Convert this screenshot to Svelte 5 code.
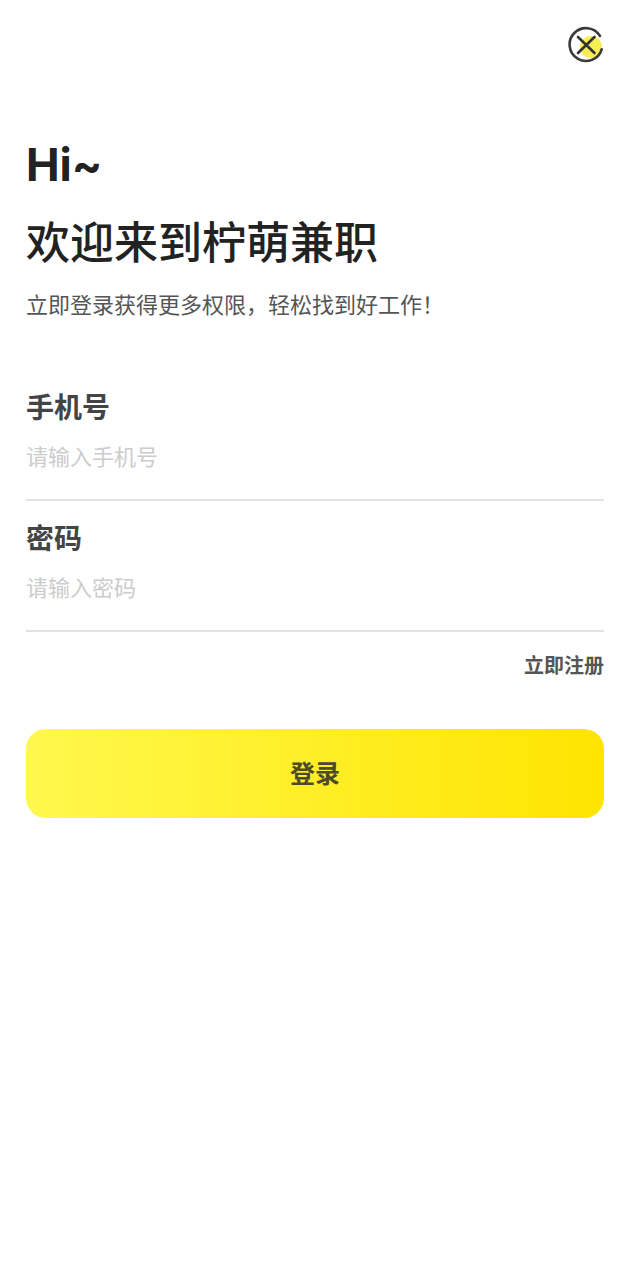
<script>
    let phone = $state('');
    let password = $state('');
</script>

<div class="page">
    <div class="top">
        <button type="button" class="close" aria-label="close">
            <svg width="38" height="38" viewBox="0 0 38 38" fill="none">
                <circle cx="24" cy="22" r="11" fill="#f7ee55" />
                <path d="M33 11 A16.4 16.4 0 1 0 34.7 24.3" stroke="#3a3a3a" stroke-width="2.6" stroke-linecap="round" />
                <path d="M11 12 L27.5 28 M27.5 12 L11 28" stroke="#333" stroke-width="2.6" stroke-linecap="round" />
            </svg>
        </button>
    </div>

    <h1 class="hi">Hi~</h1>
    <h2 class="welcome">欢迎来到柠萌兼职</h2>
    <p class="sub">立即登录获得更多权限，轻松找到好工作！</p>

    <div class="field first">
        <label for="phone">手机号</label>
        <input id="phone" type="text" placeholder="请输入手机号" bind:value={phone} />
    </div>
    <div class="field">
        <label for="pwd">密码</label>
        <input id="pwd" type="password" placeholder="请输入密码" bind:value={password} />
    </div>

    <div class="register">立即注册</div>

    <button type="button" class="login">登录</button>
</div>

<style>
    :global(body) {
        background: #fff;
    }

    .page {
        height: 1280px;
        box-sizing: border-box;
        padding: 25px 26px 0 26px;
        font-family: "Noto Sans CJK SC", "Liberation Sans", sans-serif;
        overflow: hidden;
    }

    .top {
        display: flex;
        justify-content: flex-end;
    }

    .close {
        width: 38px;
        height: 38px;
        padding: 0;
        margin-right: -1px;
        border: none;
        background: none;
    }

    .close svg {
        display: block;
    }

    .hi {
        margin: 74px 0 0;
        font-family: "Inter", "Liberation Sans", sans-serif;
        font-size: 45px;
        line-height: 56px;
        font-weight: 700;
        color: #222;
    }

    .welcome {
        margin: 19px 0 0;
        font-size: 44px;
        line-height: 56px;
        font-weight: 500;
        color: #222;
    }

    .sub {
        margin: 19px 0 0;
        font-size: 22px;
        line-height: 32px;
        color: #555;
    }

    .field {
        border-bottom: 2px solid #e2e2e2;
        height: 113px;
        margin-top: 16px;
        display: flex;
        flex-direction: column;
    }

    .field.first {
        margin-top: 67px;
    }

    label {
        font-size: 28px;
        line-height: 40px;
        font-weight: 700;
        color: #444;
    }

    input {
        margin-top: 13px;
        padding: 0;
        border: none;
        outline: none;
        height: 32px;
        font-family: inherit;
        font-size: 22px;
        color: #444;
    }

    input::placeholder {
        color: #ccc;
        opacity: 1;
    }

    .register {
        margin-top: 18px;
        text-align: right;
        font-size: 20px;
        line-height: 30px;
        font-weight: 700;
        color: #555;
    }

    .login {
        display: block;
        width: 100%;
        height: 89px;
        margin-top: 49px;
        padding: 0 0 4px;
        border: none;
        border-radius: 20px;
        background: linear-gradient(90deg, #fff84e, #ffe400);
        font-family: inherit;
        font-size: 25px;
        font-weight: 700;
        color: #4d4a2a;
    }
</style>
